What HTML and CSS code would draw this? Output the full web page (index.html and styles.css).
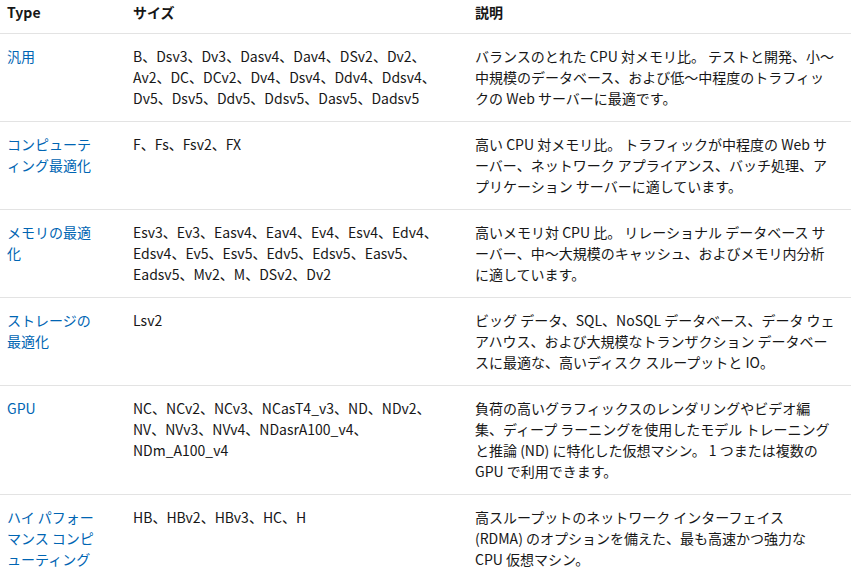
FILE: index.html
```html
<!DOCTYPE html>
<html lang="ja">
<head>
<meta charset="utf-8">
<title>VM sizes</title>
<link rel="stylesheet" href="styles.css">
</head>
<body>
<table class="sizes">
  <colgroup>
    <col class="c-type">
    <col class="c-size">
    <col class="c-desc">
  </colgroup>
  <thead>
    <tr><th class="type">Type</th><th class="size">サイズ</th><th class="desc">説明</th></tr>
  </thead>
  <tbody>
    <tr>
      <td class="type"><a href="#">汎用</a></td>
      <td class="size">B、Dsv3、Dv3、Dasv4、Dav4、DSv2、Dv2、Av2、DC、DCv2、Dv4、Dsv4、Ddv4、Ddsv4、Dv5、Dsv5、Ddv5、Ddsv5、Dasv5、Dadsv5</td>
      <td class="desc">バランスのとれた CPU 対メモリ比。 テストと開発、小～中規模のデータベース、および低～中程度のトラフィックの Web サーバーに最適です。</td>
    </tr>
    <tr>
      <td class="type"><a href="#">コンピューティング最適化</a></td>
      <td class="size">F、Fs、Fsv2、FX</td>
      <td class="desc">高い CPU 対メモリ比。 トラフィックが中程度の Web サーバー、ネットワーク アプライアンス、バッチ処理、アプリケーション サーバーに適しています。</td>
    </tr>
    <tr>
      <td class="type"><a href="#">メモリの最適化</a></td>
      <td class="size">Esv3、Ev3、Easv4、Eav4、Ev4、Esv4、Edv4、Edsv4、Ev5、Esv5、Edv5、Edsv5、Easv5、Eadsv5、Mv2、M、DSv2、Dv2</td>
      <td class="desc">高いメモリ対 CPU 比。 リレーショナル データベース サーバー、中～大規模のキャッシュ、およびメモリ内分析に適しています。</td>
    </tr>
    <tr>
      <td class="type"><a href="#">ストレージの最適化</a></td>
      <td class="size">Lsv2</td>
      <td class="desc">ビッグ データ、SQL、NoSQL データベース、データ ウェアハウス、および大規模なトランザクション データベースに最適な、高いディスク スループットと IO。</td>
    </tr>
    <tr>
      <td class="type"><a href="#">GPU</a></td>
      <td class="size">NC、NCv2、NCv3、NCasT4_v3、ND、NDv2、NV、NVv3、NVv4、NDasrA100_v4、NDm_A100_v4</td>
      <td class="desc">負荷の高いグラフィックスのレンダリングやビデオ編集、ディープ ラーニングを使用したモデル トレーニングと推論 (ND) に特化した仮想マシン。 1 つまたは複数の GPU で利用できます。</td>
    </tr>
    <tr>
      <td class="type"><a href="#">ハイ パフォーマンス コンピューティング</a></td>
      <td class="size">HB、HBv2、HBv3、HC、H</td>
      <td class="desc desc-tight">高スループットのネットワーク インターフェイス (RDMA) のオプションを備えた、最も高速かつ強力な CPU 仮想マシン。</td>
    </tr>
  </tbody>
</table>
</body>
</html>
```

FILE: styles.css
```css
html, body {
  margin: 0;
  padding: 0;
  background: #ffffff;
}

body {
  font-family: "Noto Sans CJK JP", sans-serif;
  font-size: 14px;
  line-height: 21px;
  color: #171717;
  line-break: loose;
}

.sizes {
  width: 851px;
  table-layout: fixed;
  border-collapse: collapse;
}

.c-type { width: 126px; }
.c-size { width: 342px; }
.c-desc { width: 383px; }

.sizes th,
.sizes td {
  text-align: left;
  vertical-align: top;
  padding: 12px 15px 12px 7px;
  border-bottom: 1px solid #e3e3e3;
}

.sizes th {
  font-weight: 700;
  padding-top: 2px;
  padding-bottom: 10px;
}

.sizes .type { padding-right: 27px; }
.sizes .size { padding-right: 16px; }
.sizes .desc-tight { padding-right: 20px; }

.sizes a {
  color: #0065b3;
  text-decoration: none;
}
```
